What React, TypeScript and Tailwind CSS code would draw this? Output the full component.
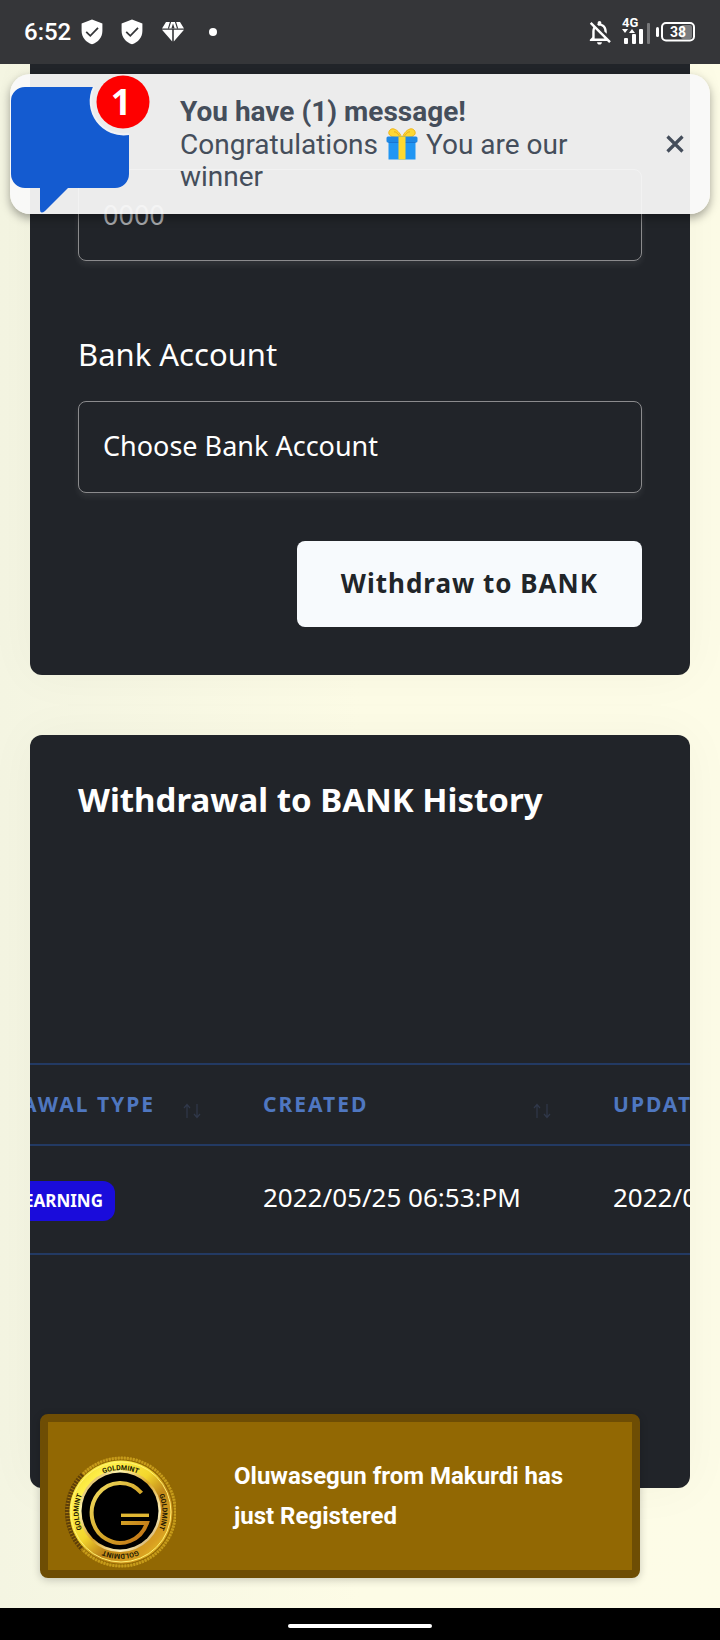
import { useLayoutEffect, useRef } from "react";
import { MdOutlineNotificationsOff } from "react-icons/md";

function Shield() {
  return (
    <svg viewBox="0 0 22 26" className="h-[26px] w-[22px]" aria-hidden="true">
      <path d="M11 0.6 L21.4 4.6 V12 C21.4 18.5 17 23.4 11 25.2 C5 23.4 0.6 18.5 0.6 12 V4.6 Z" fill="#fff" />
      <path d="M5.2 12.8 L9.3 16.8 L17 8.8" fill="none" stroke="#353639" strokeWidth="1.8" />
    </svg>
  );
}

function Gem() {
  return (
    <svg viewBox="0 0 24 22" className="h-[22px] w-6" aria-hidden="true">
      <path d="M5 1 H19 L23 7.4 H1 Z M1 8.8 H11.2 V20.6 Z M12.8 8.8 H23 L12.8 20.6 Z" fill="#fff" />
      <path d="M9.6 0.6 L7.4 7.6 M14.4 0.6 L16.6 7.6" fill="none" stroke="#353639" strokeWidth="1.2" />
      <path d="M12 2.5 L10.4 7.4 H13.6 Z" fill="#353639" />
    </svg>
  );
}

function Signal() {
  return (
    <svg viewBox="0 0 30 32" className="mb-1 h-8 w-[30px]" aria-hidden="true">
      <text x="0" y="13" fill="#fff" fontSize="13" fontWeight="700" fontFamily="Roboto, sans-serif">4G</text>
      <path d="M0 15 H6 L3 19 Z M7 19 H13 L10 15 Z" fill="#fff" />
      <rect x="2" y="24" width="4" height="6" rx="1" fill="#fff" />
      <rect x="10" y="20" width="4" height="10" rx="1" fill="#fff" />
      <rect x="17" y="15" width="4" height="15" rx="1" fill="#fff" />
      <rect x="25" y="9" width="3" height="21" rx="1" fill="#77787a" />
    </svg>
  );
}

function Battery() {
  return (
    <svg viewBox="0 0 40 20" className="h-5 w-10" aria-hidden="true">
      <rect x="0" y="5" width="3" height="10" rx="1.5" fill="#fff" />
      <rect x="25" y="3" width="11" height="14" rx="2" fill="#7b7c7e" />
      <rect x="6" y="1" width="32" height="17.5" rx="4" fill="none" stroke="#fff" strokeWidth="2" />
      <text x="22" y="15" textAnchor="middle" fill="#fff" fontSize="14" fontWeight="700" fontFamily="Roboto, sans-serif">38</text>
    </svg>
  );
}

function MessageIcon() {
  return (
    <svg viewBox="0 0 140 140" className="h-[140px] w-[140px] shrink-0" aria-hidden="true">
      <path d="M15 13 H84 A33 33 0 0 0 119 60 V100 A14 14 0 0 1 105 114 H58 L35 137 Q30 141 30 135 V114 H15 A14 14 0 0 1 1 100 V27 A14 14 0 0 1 15 13 Z" fill="#145bd0" />
      <path d="M84 13 A33 33 0 0 0 119 60" fill="none" stroke="#f2f3f6" strokeWidth="2" />
      <circle cx="113" cy="28" r="26.5" fill="#fe0000" />
      <text x="111" y="41" textAnchor="middle" fill="#fff" fontSize="36" fontWeight="700" fontFamily="Open Sans, sans-serif">1</text>
    </svg>
  );
}

function Gift() {
  return (
    <svg viewBox="0 0 32 32" className="mx-2 inline-block h-8 w-8 align-[-6px]" role="img" aria-label="gift">
      <path d="M15 10 C11 10 4 9 3 6 C2 3 5 0 8 1 C12 2 15 7 16 10 C17 7 20 2 24 1 C27 0 30 3 29 6 C28 9 21 10 17 10 Z" fill="#fdd835" stroke="#f0b41c" strokeWidth="1" />
      <path d="M8 4 C10 3 13 7 14 9 M24 4 C22 3 19 7 18 9" fill="none" stroke="#e9a91b" strokeWidth="1" />
      <rect x="2.5" y="12" width="27" height="19.5" fill="#2196f3" />
      <rect x="0.5" y="8.5" width="31" height="6" rx="1.5" fill="#1e88e5" />
      <path d="M2.5 14.5 H29.5" stroke="#1976d2" strokeWidth="1" />
      <rect x="12.5" y="8.5" width="7" height="23" fill="#ffd92f" />
    </svg>
  );
}

function Coin() {
  return (
    <svg viewBox="0 0 112 112" className="h-28 w-28 shrink-0" aria-hidden="true">
      <defs>
        <linearGradient id="rim" x1="0" y1="0" x2="1" y2="1">
          <stop offset="0" stopColor="#e8cf1f" />
          <stop offset="0.22" stopColor="#fff04a" />
          <stop offset="0.45" stopColor="#f3d62c" />
          <stop offset="0.6" stopColor="#c1891a" />
          <stop offset="0.8" stopColor="#d79d20" />
          <stop offset="1" stopColor="#f6e22f" />
        </linearGradient>
        <linearGradient id="bevel" x1="0" y1="0" x2="1" y2="1">
          <stop offset="0" stopColor="#b87b12" />
          <stop offset="0.25" stopColor="#fff5b0" />
          <stop offset="0.5" stopColor="#d9a52a" />
          <stop offset="0.75" stopColor="#fff3c0" />
          <stop offset="1" stopColor="#a56a10" />
        </linearGradient>
        <linearGradient id="letter" x1="0" y1="0" x2="1" y2="1">
          <stop offset="0" stopColor="#f2df63" />
          <stop offset="0.55" stopColor="#d4a628" />
          <stop offset="1" stopColor="#c06c12" />
        </linearGradient>
        <path id="arcTop" d="M14.5 56 A42 42 0 0 1 98.5 56" />
        <path id="arcRight" d="M56.5 14 A42 42 0 0 1 56.5 98" />
        <path id="arcBottom" d="M98.5 56 A42 42 0 0 1 14.5 56" />
        <path id="arcLeft" d="M56.5 98 A42 42 0 0 1 56.5 14" />
      </defs>
      <circle cx="57" cy="56" r="54" fill="none" stroke="#a97910" strokeWidth="2" strokeDasharray="2 1" />
      <path d="M19 19 A53 53 0 0 0 19 93" fill="none" stroke="#5d3e08" strokeWidth="6" strokeDasharray="2 1" />
      <path d="M19 18 A54 54 0 1 1 18 93" fill="none" stroke="#c79d1a" strokeWidth="3" strokeDasharray="2 1" />
      <circle cx="57" cy="56" r="51.5" fill="url(#rim)" />
      <circle cx="57" cy="56" r="50" fill="none" stroke="#fff173" strokeWidth="1" />
      <circle cx="56" cy="55" r="41" fill="url(#bevel)" />
      <circle cx="56" cy="55" r="38.5" fill="#000" />
      <path d="M77.5 37 A28.5 30 0 1 0 83 67 H57" fill="none" stroke="url(#letter)" strokeWidth="4" />
      <path d="M57 57.6 H85 V61 H57 Z" fill="#e0b733" />
      <g fill="#241b04" fontSize="7" fontWeight="700" fontFamily="Roboto, sans-serif" textAnchor="middle">
        <text><textPath href="#arcTop" startOffset="50%">GOLDMINT</textPath></text>
        <text><textPath href="#arcRight" startOffset="50%">GOLDMINT</textPath></text>
        <text><textPath href="#arcBottom" startOffset="50%">GOLDMINT</textPath></text>
        <text><textPath href="#arcLeft" startOffset="50%">GOLDMINT</textPath></text>
      </g>
    </svg>
  );
}

function SortArrows() {
  return (
    <svg viewBox="0 0 18 16" className="mt-3 h-4 w-[18px]" aria-hidden="true">
      <path d="M4 15 V2 M1 5 L4 1.5 L7 5 M14 1 V14 M11 11 L14 14.5 L17 11" fill="none" stroke="#30384a" strokeWidth="1.2" />
    </svg>
  );
}

function HeaderCell({ children, end = false }: { children: string; end?: boolean }) {
  return (
    <th scope="col" className="h-[81px] border-y-2 border-[#233a63] py-0 pr-[14px] pl-12 text-left text-[21px] font-bold tracking-[2px] text-[#4f77c0]">
      <div className={end ? "flex items-center justify-end gap-7" : "flex items-center justify-between"}>
        <span>{children}</span>
        <SortArrows />
      </div>
    </th>
  );
}

function HistoryTable() {
  const scroller = useRef<HTMLDivElement>(null);

  useLayoutEffect(() => {
    if (scroller.current) scroller.current.scrollLeft = 165;
  }, []);

  return (
    <div ref={scroller} className="mt-[239px] overflow-x-auto [scrollbar-width:none]">
      <table className="w-[1050px] table-fixed border-collapse whitespace-nowrap">
        <thead>
          <tr>
            <HeaderCell end>WITHDRAWAL TYPE</HeaderCell>
            <HeaderCell>CREATED</HeaderCell>
            <HeaderCell>UPDATED</HeaderCell>
          </tr>
        </thead>
        <tbody className="text-[26px] text-white">
          <tr>
            <td className="h-[109px] border-b-2 border-[#233a63] py-0 pr-[100px] pl-12 text-right">
              <span className="inline-block rounded-xl bg-[#1a0cdb] px-3 align-middle text-[17px] leading-10 font-bold">
                EARNING
              </span>
            </td>
            <td className="border-b-2 border-[#233a63] py-0 pr-0 pb-1 pl-12">2022/05/25 06:53:PM</td>
            <td className="border-b-2 border-[#233a63] py-0 pr-0 pb-1 pl-12">2022/05/25 06:53:PM</td>
          </tr>
        </tbody>
      </table>
    </div>
  );
}

export default function App() {
  return (
    <div className="relative flex min-h-screen flex-col bg-[#fefee8] font-['Noto_Sans',sans-serif]">
      <header className="z-10 flex h-16 items-center justify-between bg-[#353639] pr-6 pl-6 font-[Roboto,sans-serif] text-white">
        <div className="flex items-center gap-[18px]">
          <div className="flex items-center gap-[10px]">
            <time className="text-[24px] font-medium">6:52</time>
            <Shield />
          </div>
          <Shield />
          <Gem />
          <span className="ml-[6px] h-2 w-2 rounded-full bg-white" />
        </div>
        <div className="flex items-center">
          <MdOutlineNotificationsOff className="mr-2 h-[29px] w-[29px]" aria-hidden="true" />
          <Signal />
          <span className="ml-1">
            <Battery />
          </span>
        </div>
      </header>

      <main className="flex-1 overflow-hidden bg-linear-to-r from-[#f4f5e2] via-[#fdfce6] to-[#fdfce7] px-[30px] pb-[120px]">
        <form
          className="rounded-b-xl bg-[#212429] px-12 pt-[105px] pb-12 shadow-[0_0_50px_rgba(60,60,0,0.04)]"
          onSubmit={(event) => event.preventDefault()}
        >
          <input
            aria-label="Amount"
            placeholder="0000"
            className="block h-[92px] w-full rounded-lg border border-[#8b8b8d] bg-transparent px-6 pb-[2px] text-[27px] text-white shadow-[0_4px_6px_rgba(255,255,255,0.07)] outline-none placeholder:text-[#a5a7aa]"
          />
          <label htmlFor="bank" className="mt-[69px] block text-[31px] leading-[48px] text-white">
            Bank Account
          </label>
          <select
            id="bank"
            className="mt-[23px] block h-[92px] w-full appearance-none rounded-lg border border-[#8b8b8d] bg-[#212429] px-6 pb-[2px] text-[27px] text-white shadow-[0_4px_6px_rgba(255,255,255,0.07)] outline-none"
          >
            <option>Choose Bank Account</option>
          </select>
          <div className="mt-12 flex justify-end">
            <button
              type="submit"
              className="h-[86px] rounded-lg bg-[#f7fafd] px-11 pb-[2px] text-[26px] font-bold tracking-[1px] text-[#212529]"
            >
              Withdraw to BANK
            </button>
          </div>
        </form>

        <section className="mt-[60px] overflow-hidden rounded-xl bg-[#212429] pt-[41px] pb-[233px] shadow-[0_0_50px_rgba(60,60,0,0.04)]">
          <h2 className="px-12 text-[33px] leading-[48px] font-bold text-white">Withdrawal to BANK History</h2>
          <HistoryTable />
        </section>
      </main>

      <footer className="flex h-8 items-end justify-center bg-black pb-3">
        <span className="h-1 w-36 rounded-full bg-white" />
      </footer>

      <aside className="absolute inset-x-[10px] top-[74px] z-20 flex h-[140px] items-center rounded-[20px] bg-[#f9f9f9]/94 font-[Roboto,sans-serif] text-[#454e5b] shadow-[0_4px_10px_rgba(0,0,0,0.35)]">
        <MessageIcon />
        <div className="ml-[30px] flex-1 text-[28px] leading-8">
          <p className="font-bold">You have (1) message!</p>
          <p className="max-w-[420px]">
            Congratulations
            <Gift />
            You are our winner
          </p>
        </div>
        <button type="button" aria-label="Close" className="mr-[26px] flex h-[18px] w-[18px]">
          <svg viewBox="0 0 18 18" className="h-full w-full" aria-hidden="true">
            <path d="M1.5 1.5 L16.5 16.5 M16.5 1.5 L1.5 16.5" stroke="#454e5b" strokeWidth="3.2" />
          </svg>
        </button>
      </aside>

      <aside className="absolute right-20 bottom-[62px] left-10 z-20 flex h-[164px] items-start rounded-lg border-8 border-[#6e4d04] bg-[#926803] pt-[34px] pl-4 font-[Roboto,sans-serif] text-white shadow-[0_2px_8px_rgba(0,0,0,0.2)]">
        <Coin />
        <p className="ml-[58px] max-w-[350px] text-[24px] leading-10 font-bold">
          Oluwasegun from Makurdi has just Registered
        </p>
      </aside>
    </div>
  );
}
